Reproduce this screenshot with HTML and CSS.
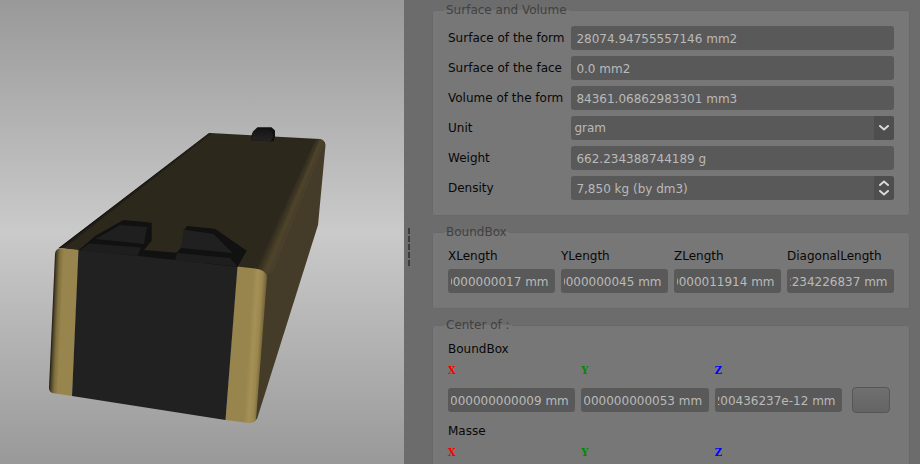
FILE: index.html
```html
<!DOCTYPE html>
<html lang="en">
<head>
<meta charset="utf-8">
<title>Part properties</title>
<link rel="stylesheet" href="styles.css">
</head>
<body>
<div class="window">
  <main class="viewport">
    <svg class="scene" viewBox="0 0 404 464" preserveAspectRatio="xMidYMid slice" role="img" aria-label="3D view">
      <defs>
        <linearGradient id="goldLeft" gradientUnits="userSpaceOnUse" x1="52" y1="320" x2="75" y2="321">
          <stop offset="0" stop-color="#1d190f"/><stop offset=".08" stop-color="#4c4228"/><stop offset=".22" stop-color="#80703f"/><stop offset=".4" stop-color="#98854e"/><stop offset="1" stop-color="#98854e"/>
        </linearGradient>
        <linearGradient id="goldRight" gradientUnits="userSpaceOnUse" x1="231" y1="344" x2="263" y2="346">
          <stop offset="0" stop-color="#98854e"/><stop offset=".55" stop-color="#98854e"/><stop offset=".7" stop-color="#a59156"/><stop offset=".84" stop-color="#9c884f"/><stop offset="1" stop-color="#6c5d38"/>
        </linearGradient>
        <linearGradient id="bevelUp" gradientUnits="userSpaceOnUse" x1="282" y1="210" x2="291" y2="214">
          <stop offset="0" stop-color="#2d281c"/><stop offset="1" stop-color="#4e442b"/>
        </linearGradient>
        <linearGradient id="sight" x1="0" y1="0" x2="0" y2="1">
          <stop offset="0" stop-color="#161616"/><stop offset="1" stop-color="#242424"/>
        </linearGradient>
      </defs>
      <!-- slide body -->
      <path fill="#443b28" d="M250 272 320 139Q325 140 325.500 145L318 225 257 419 252 421Z"/>
      <path fill="#2d281c" d="M59 248 210 133 320 139 257 271 237 270Z"/>
      <path fill="url(#bevelUp)" d="M316 139 320 139 323 141 267 272 255 270Z"/>
      <path fill="#4d432b" d="M320 139 323 141 268 275 264 272Z"/>
      <path fill="#493f2a" d="M323 141 325 143 273 272 268 275Z"/>
      <path fill="#15130f" d="M58 248.500 209 133 210.500 133 61 248Z"/>
      <path fill="#211e16" d="M61 248 210.500 133 212 133 65 247.500Z"/>
      <!-- front face -->
      <path fill="url(#goldLeft)" d="M55 254Q55.500 248.500 61 248.300L79 250 72 396 55 393.500Q49 393 49 388Z"/>
      <path fill="url(#goldRight)" d="M237 266.500 255 268.500Q266 269.500 267 277L256 420Q254 423 249 423L225.500 420Z"/>
      <path fill="#212121" d="M78.500 249 138 256 175 260 237.500 266.500 225.500 420 72 396Z"/>
      <!-- rear sight -->
      <path fill="#111" d="M79 250 95 236 123.500 220 151.700 222.700 151.700 240.700 144 250 176.500 252.700 181.700 247 184 230 187 226 215 228.700 246.700 250.700 237.500 267 175 260 138 256Z"/>
      <path fill="#1f1f1f" d="M120 225 147 227 144 244 95.500 239Z"/>
      <path fill="#1e1e1e" d="M89 243.500 141 247.500 137.500 256 80 250.500Z"/>
      <path fill="#202020" d="M183.500 229.500 213.500 234 232.500 253 181.500 248Z"/>
      <path fill="#1e1e1e" d="M177 253 230 258 237.500 266.500 175 260.500Z"/>
      <!-- front sight -->
      <path fill="#111" d="M251.300 140.500V136L253 131.500 257.500 127.300H271.500L275 130.500V136.500L273.500 141.500Z"/>
      <path fill="url(#sight)" d="M251.700 140.200 252 134 256 129.500H269.500L272.700 133V137.500L270.500 141.300Z"/>
    </svg>
  </main>

  <div class="splitter" role="separator" aria-orientation="vertical">
    <span class="grip"></span><span class="grip"></span><span class="grip"></span><span class="grip"></span><span class="grip"></span>
  </div>

  <form class="panel">
    <fieldset class="group">
      <legend class="title">Surface and Volume</legend>
      <div class="rows">
        <label for="surface-form">Surface of the form</label>
        <input class="field" id="surface-form" type="text" value="28074.94755557146 mm2">
        <label for="surface-face">Surface of the face</label>
        <input class="field" id="surface-face" type="text" value="0.0 mm2">
        <label for="volume">Volume of the form</label>
        <input class="field" id="volume" type="text" value="84361.06862983301 mm3">
        <label for="unit">Unit</label>
        <div class="combo">
          <select class="field drop" id="unit"><option>gram</option></select>
          <span class="side arrow"><svg class="chevron" viewBox="0 0 10 6"><path d="M1 1 5 4.500 9 1"/></svg></span>
        </div>
        <label for="weight">Weight</label>
        <input class="field" id="weight" type="text" value="662.234388744189 g">
        <label for="density">Density</label>
        <div class="combo">
          <input class="field" id="density" type="text" value="7,850 kg (by dm3)">
          <span class="side">
            <button class="step" type="button" aria-label="Increase"><svg class="chevron" viewBox="0 0 10 6"><path d="M1 5 5 1.500 9 5"/></svg></button>
            <button class="step" type="button" aria-label="Decrease"><svg class="chevron" viewBox="0 0 10 6"><path d="M1 1 5 4.500 9 1"/></svg></button>
          </span>
        </div>
      </div>
    </fieldset>

    <fieldset class="group">
      <legend class="title">BoundBox</legend>
      <div class="lengths">
        <div class="stack"><label for="xl">XLength</label><input class="field tail" id="xl" type="text" value="0000000017 mm"></div>
        <div class="stack"><label for="yl">YLength</label><input class="field tail" id="yl" type="text" value="0000000045 mm"></div>
        <div class="stack"><label for="zl">ZLength</label><input class="field tail" id="zl" type="text" value="0000011914 mm"></div>
        <div class="stack"><label for="dl">DiagonalLength</label><input class="field tail" id="dl" type="text" value="2234226837 mm"></div>
      </div>
    </fieldset>

    <fieldset class="group">
      <legend class="title">Center of :</legend>
      <div class="centers">
        <section class="center">
          <div class="name">BoundBox</div>
          <div class="axes">
            <label class="axis x" for="bx">X</label><label class="axis y" for="by">Y</label><label class="axis z" for="bz">Z</label>
          </div>
          <div class="axes values">
            <input class="field tail" id="bx" type="text" value="000000000009 mm">
            <input class="field tail" id="by" type="text" value="000000000053 mm">
            <input class="field tail" id="bz" type="text" value="200436237e-12 mm">
            <button class="push" type="button" aria-label="Create point"></button>
          </div>
        </section>
        <section class="center">
          <div class="name">Masse</div>
          <div class="axes">
            <span class="axis x">X</span><span class="axis y">Y</span><span class="axis z">Z</span>
          </div>
        </section>
      </div>
    </fieldset>
  </form>
</div>
<script src="script.js"></script>
</body>
</html>
```
FILE: styles.css
```css
* {
  box-sizing: border-box;
}

body {
  margin: 0;
  background: #6c6c6c;
  color: #080808;
  font: 12px/15px "DejaVu Sans", sans-serif;
}

.window {
  display: grid;
  grid-template-columns: minmax(0, 404fr) 10px minmax(0, 506fr);
  height: 100vh;
  overflow: hidden;
}

.viewport {
  min-height: 0;
  background: linear-gradient(#999, #cacaca 50%, #999);
}

.scene {
  display: block;
  width: 100%;
  height: 100%;
}

.splitter {
  display: flex;
  flex-direction: column;
  align-items: center;
  justify-content: center;
  gap: 2px;
  padding-top: 30px;
}

.grip {
  width: 2px;
  height: 6px;
  background: #3c3c3c;
}

.panel {
  display: flex;
  flex-direction: column;
  gap: 9px;
  min-height: 0;
  padding: 3px 10px 0 18px;
  overflow: hidden;
}

.group {
  flex: none;
  min-width: 0;
  margin: 0;
  padding: 8px 15px 15px;
  border: 1px solid #696969;
  border-radius: 3px;
  background: #777;
}

.title {
  margin-left: -4px;
  padding: 0 2px;
  color: #414141;
}

.rows {
  display: grid;
  grid-template-columns: max-content minmax(0, 1fr);
  align-items: center;
  gap: 6px 7px;
}

.rows label {
  line-height: 16px;
}

.field {
  display: block;
  width: 100%;
  min-width: 0;
  height: 24px;
  margin: 0;
  padding: 1px 5px 0;
  border: 0;
  border-radius: 3px;
  outline: 0;
  background: #595959;
  color: #bababa;
  font: inherit;
}

.tail {
  padding: 1px 6px 0 3px;
}

.drop {
  padding: 1px 20px 0 3px;
  appearance: none;
}

.combo {
  position: relative;
}

.side {
  position: absolute;
  top: 0;
  right: 0;
  bottom: 0;
  display: flex;
  flex-direction: column;
  justify-content: center;
  width: 20px;
  border-radius: 0 3px 3px 0;
  background: #4e4e4e;
}

.arrow {
  align-items: center;
  pointer-events: none;
}

.step {
  display: flex;
  align-items: center;
  justify-content: center;
  height: 10px;
  padding: 0;
  border: 0;
  background: none;
}

.chevron {
  display: block;
  width: 10px;
  height: 6px;
  fill: none;
  stroke: #d8d8d8;
  stroke-width: 2;
  stroke-linecap: round;
}

.lengths {
  display: grid;
  grid-template-columns: repeat(4, minmax(0, 1fr));
  gap: 6px;
}

.stack {
  display: grid;
  gap: 5px;
}

.stack label {
  line-height: 16px;
}

.centers {
  display: grid;
  gap: 10px;
}

.name {
  line-height: 16px;
  margin-bottom: 4px;
}

.axes {
  display: grid;
  grid-template-columns: repeat(3, minmax(0, 1fr)) 46px;
  align-items: center;
  gap: 6px;
}

.values {
  margin-top: 6px;
}

.axis {
  font: bold 11px/20px "DejaVu Serif Condensed", "DejaVu Serif", serif;
}

.x {
  color: #f00;
}

.y {
  color: #008a00;
}

.z {
  color: #00f;
}

.push {
  height: 26px;
  margin: 0 4px;
  border: 1px solid #565656;
  border-radius: 4px;
  background: linear-gradient(#707070, #646464);
}
```
FILE: script.js
```js
// Long values show their last digits and the unit.
document.querySelectorAll(".tail").forEach(function (field) {
  field.scrollLeft = field.scrollWidth;
});
```
